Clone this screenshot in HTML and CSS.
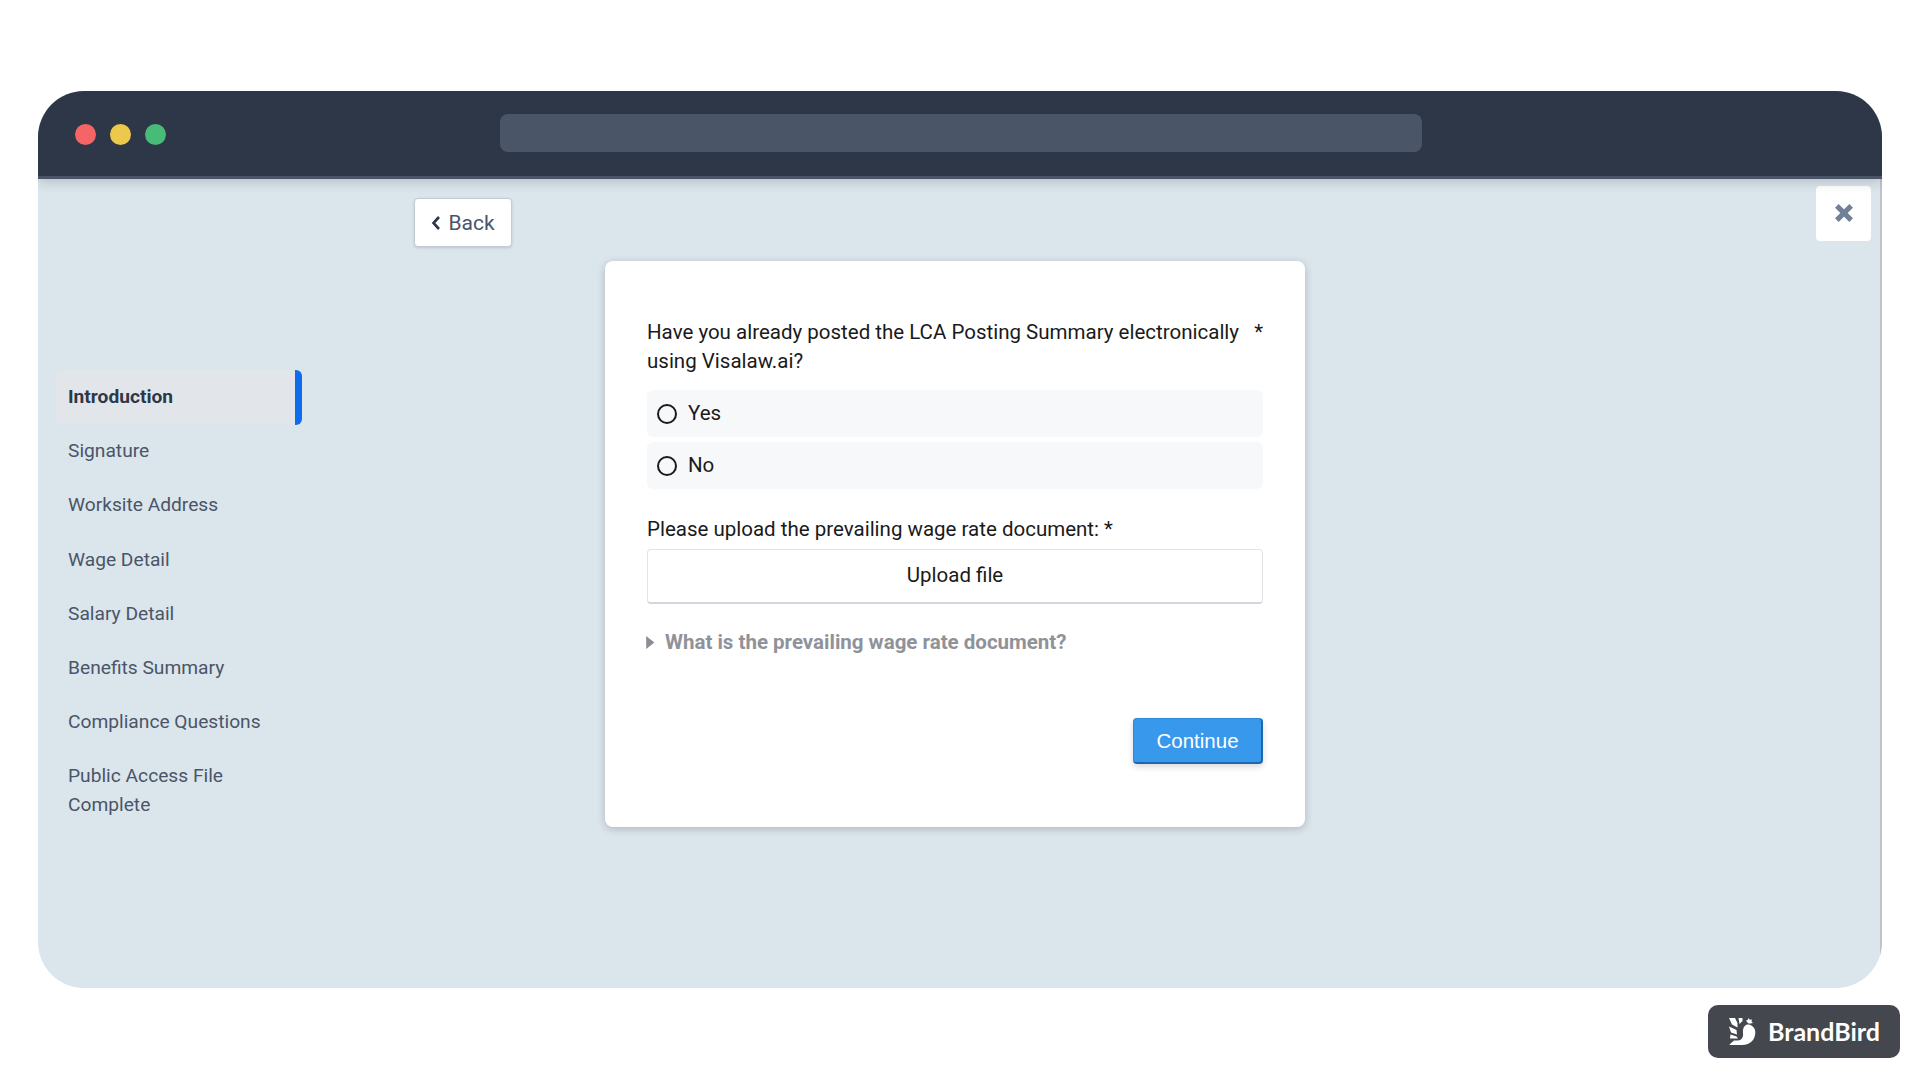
FILE: index.html
```html
<!DOCTYPE html>
<html lang="en">
<head>
<meta charset="utf-8">
<title>Visalaw.ai</title>
<link rel="stylesheet" href="styles.css">
</head>
<body>
<div class="window">
  <header class="titlebar">
    <div class="dots">
      <span class="dot dot-red"></span>
      <span class="dot dot-yellow"></span>
      <span class="dot dot-green"></span>
    </div>
    <div class="urlbar"></div>
  </header>
  <div class="content">
    <nav class="sidebar">
      <a class="nav-item active">Introduction</a>
      <a class="nav-item">Signature</a>
      <a class="nav-item">Worksite Address</a>
      <a class="nav-item">Wage Detail</a>
      <a class="nav-item">Salary Detail</a>
      <a class="nav-item">Benefits Summary</a>
      <a class="nav-item">Compliance Questions</a>
      <a class="nav-item">Public Access File Complete</a>
    </nav>
    <main class="main">
      <button class="back">
        <svg class="back-icon" viewBox="0 0 10 16" width="10" height="16"><path d="M8 2 2.5 8 8 14" fill="none" stroke="currentColor" stroke-width="2.6"/></svg>
        <span>Back</span>
      </button>
      <section class="card">
        <div class="question">
          <span>Have you already posted the LCA Posting Summary electronically using Visalaw.ai?</span>
          <span class="req">*</span>
        </div>
        <div class="options">
          <label class="option"><span class="radio"></span>Yes</label>
          <label class="option"><span class="radio"></span>No</label>
        </div>
        <div class="upload-label">Please upload the prevailing wage rate document: *</div>
        <button class="upload">Upload file</button>
        <div class="details">
          <svg class="caret" viewBox="0 0 8 12" width="8" height="13"><path d="M0 0 7.500 6 0 12z" fill="currentColor"/></svg>
          <span>What is the prevailing wage rate document?</span>
        </div>
        <div class="actions"><button class="continue">Continue</button></div>
      </section>
    </main>
    <button class="close" aria-label="Close">
      <svg viewBox="0 0 20 20" width="22" height="22"><path d="M3.5 3.5 16.5 16.5M16.5 3.5 3.5 16.5" fill="none" stroke="#718096" stroke-width="4.6"/></svg>
    </button>
  </div>
</div>
<div class="badge">
  <svg class="badge-logo" viewBox="0 0 27 27" width="27" height="27">
    <path fill="#fff" d="M0 0H6L8.500 5V9.500L3 6.500ZM9.500 0H13.500V3L10.500 6ZM0 8.500 7.500 12 8 16.500 2 14.500ZM1.500 16.500 7.500 18.500 9 20.500H1Z"/>
    <path fill="#fff" d="M0.500 26.500 5 22.500H9C13 22 14.500 19 14 15 13.500 10.500 15 7.500 18 6.500L20 6.500C23 7.500 25 9 26 12 27.500 19 23 27 13 27H1Z"/>
    <path fill="#fff" d="M19.500 0 20.800 1.700 23 1.500 22.500 3.500 24 5 21.500 5.500 19.500 5.500 18 4 17 2.500 18.800 1.900Z"/>
  </svg>
  <span class="badge-name">BrandBird</span>
</div>
</body>
</html>
```
FILE: styles.css
```css
* { box-sizing: border-box; }
html, body { margin: 0; height: 1080px; }
body {
  background: #fff;
  padding: 91px 38px 0 38px;
  font-family: Roboto, "Liberation Sans", sans-serif;
  overflow: hidden;
  position: relative;
}
.window {
  height: 897px;
  border-radius: 46px;
  overflow: hidden;
  background: #dbe5ec;
  display: flex;
  flex-direction: column;
}
.titlebar {
  height: 88px;
  flex: none;
  background: #2d3748;
  border-bottom: 3px solid #4a5568;
  box-shadow: 0 2px 12px rgba(0, 0, 0, .2);
  position: relative;
  z-index: 1;
  display: flex;
  align-items: center;
  padding: 0 0 1px 37px;
}
.dots { display: flex; gap: 14px; width: 425px; flex: none; margin-top: 2px; }
.dot { width: 21px; height: 21px; border-radius: 50%; }
.dot-red { background: #f56565; }
.dot-yellow { background: #ecc94b; }
.dot-green { background: #48bb78; }
.urlbar { width: 922px; height: 38px; border-radius: 8px; background: #4a5568; margin-top: -1px; }
.content {
  flex: 1;
  display: flex;
  position: relative;
  border-right: 2px solid #bfc4c8;
}
.sidebar {
  width: 264px;
  flex: none;
  padding: 191px 0 0 18px;
  display: flex;
  flex-direction: column;
}
.nav-item {
  display: block;
  padding: 13px 30px 13px 12px;
  font-size: 19.2px;
  line-height: 28.2px;
  color: #4a5568;
  width: 246px;
  border-radius: 6px;
}
.nav-item.active {
  font-weight: 700;
  color: #2d3748;
  background: #e2e6eb;
  border-right: 7px solid #0f6cec;
  padding-bottom: 14px;
  margin-bottom: -1px;
}
.main { margin-left: 112px; padding-top: 19px; display: flex; flex-direction: column; align-items: flex-start; }
button { font-family: inherit; cursor: pointer; }
.back {
  width: 98px;
  height: 49px;
  padding: 0;
  display: flex;
  align-items: center;
  justify-content: center;
  gap: 7px;
  background: #fff;
  color: #4a5568;
  border: 1px solid #c3ccd6;
  border-radius: 4px;
  box-shadow: 0 1px 3px rgba(0, 0, 0, .14);
  font-size: 21px;
}
.back-icon { color: #2d3748; }
.card {
  margin: 14px 0 0 191px;
  width: 700px;
  height: 566px;
  background: #fff;
  border-radius: 8px;
  box-shadow: 0 2px 8px rgba(0, 0, 0, .2);
  padding: 57px 42px 0;
  display: flex;
  flex-direction: column;
  color: #1a1a1a;
  font-size: 20.5px;
  line-height: 29px;
}
.question { display: flex; gap: 10px; justify-content: space-between; }
.req { flex: none; }
.options { margin-top: 14px; display: flex; flex-direction: column; gap: 5px; }
.option {
  height: 47px;
  background: #f7f8fa;
  border-radius: 6px;
  padding-left: 10px;
  display: flex;
  align-items: center;
  gap: 11px;
}
.radio { width: 20px; height: 20px; border: 2px solid #1a1a1a; border-radius: 50%; }
.upload-label { margin-top: 26px; }
.upload {
  margin-top: 5px;
  height: 55px;
  width: 100%;
  padding: 0 0 2px;
  background: #fff;
  color: #1a1a1a;
  border: 1px solid #e0e3e8;
  border-bottom: 2px solid #d3d7dd;
  border-radius: 4px;
  font-size: 20.5px;
}
.details {
  margin-top: 24px;
  display: flex;
  align-items: center;
  gap: 10px;
  color: #8f9299;
  font-weight: 700;
}
.caret { color: #8a8d94; margin-left: -1px; width: 9px; }
.actions { display: flex; justify-content: flex-end; margin-top: 61px; }
.continue {
  width: 130px;
  height: 46px;
  background: #3898ec;
  color: #fff;
  border: 1px solid #3089d8;
  border-bottom: 2px solid #1c68ad;
  border-right: 2px solid #1c68ad;
  border-radius: 4px;
  box-shadow: 0 3px 6px rgba(0, 0, 0, .15);
  font-family: "Liberation Sans", sans-serif;
  font-size: 20.5px;
}
.close {
  position: absolute;
  top: 7px;
  right: 9px;
  width: 55px;
  height: 55px;
  background: #fff;
  border: 0;
  border-radius: 4px;
  padding: 0 0 2px;
  display: flex;
  align-items: center;
  justify-content: center;
}
.badge {
  position: absolute;
  left: 1708px;
  top: 1005px;
  width: 192px;
  height: 53px;
  background: #44474d;
  border-radius: 10px;
  display: flex;
  align-items: center;
  gap: 12px;
  padding-left: 21px;
  color: #fff;
  font-family: Lato, sans-serif;
  font-weight: 700;
  font-size: 25px;
}
.badge-name { margin-top: -2px; }
```
